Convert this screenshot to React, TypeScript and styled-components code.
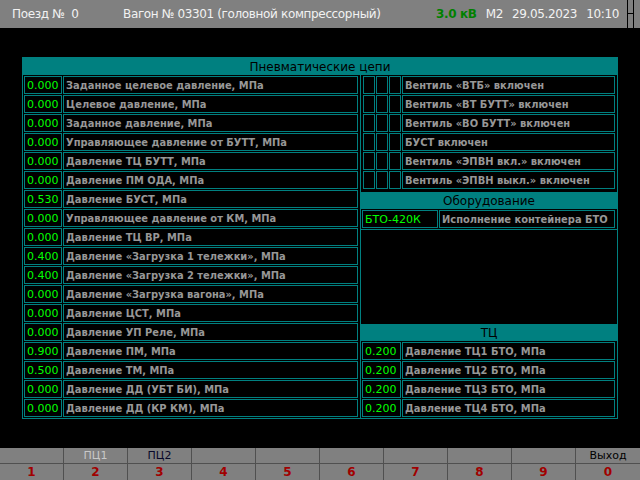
import React from 'react';
import styled, { createGlobalStyle } from 'styled-components';

const TEAL = '#008080';
const FONT = '"DejaVu Sans", "Liberation Sans", sans-serif';
const LABEL_FONT = '"DejaVu Sans Condensed", "DejaVu Sans", sans-serif';

const GlobalStyle = createGlobalStyle`
  html, body { margin: 0; padding: 0; background: #000; }
  body { width: 640px; height: 480px; overflow: hidden; font-family: ${FONT}; }
  * { box-sizing: border-box; }
`;

const Screen = styled.div`
  width: 640px;
  height: 480px;
  display: flex;
  flex-direction: column;
  background: #000;
`;

const TopBar = styled.div`
  height: 28px;
  background: #808080;
  display: flex;
  align-items: center;
  padding-left: 12px;
  font-size: 12px;
  letter-spacing: -0.35px;
  color: #f2f2f2;
  white-space: pre;
`;

const TrainText = styled.span`
  flex: 0 0 111px;
`;

const Spacer = styled.div`
  flex: 1;
`;

const RightGroup = styled.div`
  display: flex;
  align-items: center;
  gap: 9px;
`;

const Voltage = styled.span`
  color: #008000;
  font-weight: bold;
`;

const BarIcon = styled.svg`
  margin-left: 8px;
  margin-right: 6px;
  flex: 0 0 auto;
`;

const Frame = styled.div`
  margin: 29px 0 0 22px;
  width: 596px;
  height: 362px;
  border: 1px solid ${TEAL};
  display: flex;
  flex-direction: column;
`;

const Header = styled.div`
  height: 17px;
  background: ${TEAL};
  color: #000;
  font-size: 12px;
  display: flex;
  align-items: center;
  justify-content: center;
  flex: 0 0 auto;
`;

const Body = styled.div`
  flex: 1;
  display: flex;
  min-width: 0;
`;

const LeftColumn = styled.div`
  flex: 0 0 337px;
  padding: 1px 2px 1px 1px;
  display: flex;
  flex-direction: column;
  gap: 1px;
`;

const RightColumn = styled.div`
  flex: 1 1 0;
  min-width: 0;
  border-left: 1px solid ${TEAL};
  padding-top: 1px;
  display: flex;
  flex-direction: column;
`;

const Row = styled.div`
  display: flex;
  gap: 1px;
  height: 18px;
  min-width: 0;
`;

const CheckList = styled.div`
  padding: 0 2px 0 2px;
  display: flex;
  flex-direction: column;
  gap: 1px;
`;

const Cell = styled.div<{ $w?: number }>`
  border: 1px solid ${TEAL};
  height: 18px;
  display: flex;
  align-items: center;
  padding-left: 2px;
  overflow: hidden;
  white-space: nowrap;
  min-width: 0;
  flex: ${(p) => (p.$w ? `0 0 ${p.$w}px` : '1 1 0')};
`;

const Value = styled.span`
  color: #00ff00;
  font-size: 11px;
`;

const Label = styled.span`
  color: #979797;
  font-family: ${LABEL_FONT};
  font-size: 11px;
  font-weight: bold;
`;

const SubPanel = styled.div<{ $bottom?: boolean }>`
  display: flex;
  flex-direction: column;
  margin-top: ${(p) => (p.$bottom ? 'auto' : '3px')};
  border-bottom: ${(p) => (p.$bottom ? 'none' : `1px solid ${TEAL}`)};
`;

const SubBody = styled.div`
  padding: 1px 2px 1px 1px;
  display: flex;
  flex-direction: column;
  gap: 1px;
`;

const FunctionBar = styled.div`
  margin-top: auto;
  height: 32px;
  display: flex;
  background: #808080;
`;

const FKey = styled.div<{ $last?: boolean }>`
  flex: 0 0 64px;
  display: flex;
  flex-direction: column;
  border-right: ${(p) => (p.$last ? 'none' : '1px solid #505050')};
`;

const FLabel = styled.div<{ $color: string }>`
  height: 16px;
  border-bottom: 1px solid #505050;
  color: ${(p) => p.$color};
  font-size: 11px;
  display: flex;
  align-items: center;
  justify-content: center;
`;

const FNum = styled.div`
  flex: 1;
  color: #a00000;
  font-weight: bold;
  font-size: 12px;
  display: flex;
  align-items: center;
  justify-content: center;
`;

const pressures: [string, string][] = [
  ['0.000', 'Заданное целевое давление, МПа'],
  ['0.000', 'Целевое давление, МПа'],
  ['0.000', 'Заданное давление, МПа'],
  ['0.000', 'Управляющее давление от БУТТ, МПа'],
  ['0.000', 'Давление ТЦ БУТТ, МПа'],
  ['0.000', 'Давление ПМ ОДА, МПа'],
  ['0.530', 'Давление БУСТ, МПа'],
  ['0.000', 'Управляющее давление от КМ, МПа'],
  ['0.000', 'Давление ТЦ ВР, МПа'],
  ['0.400', 'Давление «Загрузка 1 тележки», МПа'],
  ['0.400', 'Давление «Загрузка 2 тележки», МПа'],
  ['0.000', 'Давление «Загрузка вагона», МПа'],
  ['0.000', 'Давление ЦСТ, МПа'],
  ['0.000', 'Давление УП Реле, МПа'],
  ['0.900', 'Давление ПМ, МПа'],
  ['0.500', 'Давление ТМ, МПа'],
  ['0.000', 'Давление ДД (УБТ БИ), МПа'],
  ['0.000', 'Давление ДД (КР КМ), МПа'],
];

const valves = [
  'Вентиль «ВТБ» включен',
  'Вентиль «ВТ БУТТ» включен',
  'Вентиль «ВО БУТТ» включен',
  'БУСТ включен',
  'Вентиль «ЭПВН вкл.» включен',
  'Вентиль «ЭПВН выкл.» включен',
];

const tc: [string, string][] = [
  ['0.200', 'Давление ТЦ1 БТО, МПа'],
  ['0.200', 'Давление ТЦ2 БТО, МПа'],
  ['0.200', 'Давление ТЦ3 БТО, МПа'],
  ['0.200', 'Давление ТЦ4 БТО, МПа'],
];

const keys: { label: string; color: string; num: string }[] = [
  { label: '', color: '#000', num: '1' },
  { label: 'ПЦ1', color: '#c8c8c8', num: '2' },
  { label: 'ПЦ2', color: '#08082a', num: '3' },
  { label: '', color: '#000', num: '4' },
  { label: '', color: '#000', num: '5' },
  { label: '', color: '#000', num: '6' },
  { label: '', color: '#000', num: '7' },
  { label: '', color: '#000', num: '8' },
  { label: '', color: '#000', num: '9' },
  { label: 'Выход', color: '#000', num: '0' },
];

export default function App() {
  return (
    <>
      <GlobalStyle />
      <Screen>
        <TopBar>
          <TrainText>Поезд №  0</TrainText>
          <span>Вагон № 03301 (головной компрессорный)</span>
          <Spacer />
          <RightGroup>
            <Voltage>3.0 кВ</Voltage>
            <span>М2</span>
            <span>29.05.2023</span>
            <span>10:10</span>
          </RightGroup>
          <BarIcon width="7" height="28" viewBox="0 0 7 28">
            <line x1="0.5" y1="0" x2="0.5" y2="28" stroke="#000" strokeWidth="1" />
            <line x1="6.5" y1="0" x2="6.5" y2="28" stroke="#000" strokeWidth="1" />
            <line x1="0" y1="13.5" x2="7" y2="13.5" stroke="#000" strokeWidth="1" />
          </BarIcon>
        </TopBar>

        <Frame>
          <Header>Пневматические цепи</Header>
          <Body>
            <LeftColumn>
              {pressures.map(([v, l], i) => (
                <Row key={i}>
                  <Cell $w={38}>
                    <Value>{v}</Value>
                  </Cell>
                  <Cell>
                    <Label>{l}</Label>
                  </Cell>
                </Row>
              ))}
            </LeftColumn>
            <RightColumn>
              <CheckList>
                {valves.map((l, i) => (
                  <Row key={i}>
                    <Cell $w={12} />
                    <Cell $w={12} />
                    <Cell $w={12} />
                    <Cell>
                      <Label>{l}</Label>
                    </Cell>
                  </Row>
                ))}
              </CheckList>

              <SubPanel>
                <Header>Оборудование</Header>
                <SubBody>
                  <Row>
                    <Cell $w={76}>
                      <Value>БТО-420К</Value>
                    </Cell>
                    <Cell>
                      <Label>Исполнение контейнера БТО</Label>
                    </Cell>
                  </Row>
                </SubBody>
              </SubPanel>

              <SubPanel $bottom>
                <Header>ТЦ</Header>
                <SubBody>
                  {tc.map(([v, l], i) => (
                    <Row key={i}>
                      <Cell $w={39}>
                        <Value>{v}</Value>
                      </Cell>
                      <Cell>
                        <Label>{l}</Label>
                      </Cell>
                    </Row>
                  ))}
                </SubBody>
              </SubPanel>
            </RightColumn>
          </Body>
        </Frame>

        <FunctionBar>
          {keys.map((k, i) => (
            <FKey key={i} $last={i === keys.length - 1}>
              <FLabel $color={k.color}>{k.label}</FLabel>
              <FNum>{k.num}</FNum>
            </FKey>
          ))}
        </FunctionBar>
      </Screen>
    </>
  );
}
